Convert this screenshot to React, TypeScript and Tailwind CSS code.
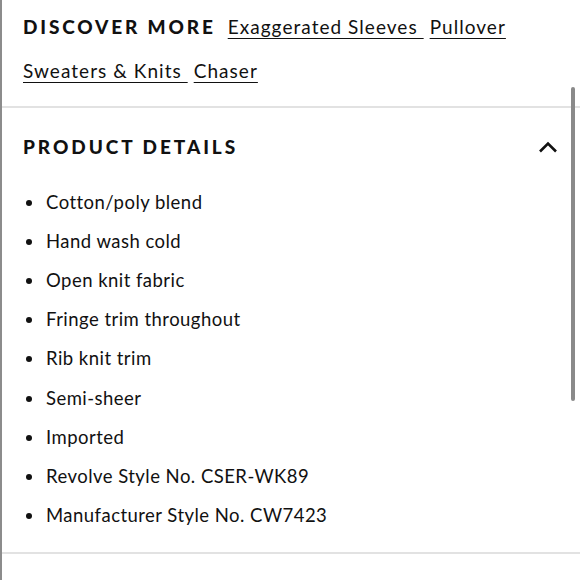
import { FC } from 'react';

const details = [
  'Cotton/poly blend',
  'Hand wash cold',
  'Open knit fabric',
  'Fringe trim throughout',
  'Rib knit trim',
  'Semi-sheer',
  'Imported',
  'Revolve Style No. CSER-WK89',
  'Manufacturer Style No. CW7423',
];

const App: FC = () => {
  return (
    <div className="relative w-[580px] h-[580px] overflow-hidden bg-white border-l-2 border-[#8c8c8c] text-[#111] font-['Lato',sans-serif]">
      {/* discover more */}
      <section className="pl-[21px] pr-4 pt-[5px] pb-[13px]">
        <div className="flex flex-wrap items-center gap-x-[6px] leading-[44px] text-[19px] tracking-[0.055em]">
          <span className="font-black text-[19px] tracking-[0.15em] mr-[6px]">DISCOVER MORE</span>
          <a href="#" className="underline underline-offset-[4px] decoration-1">Exaggerated Sleeves&nbsp;</a>
          <a href="#" className="underline underline-offset-[4px] decoration-1">Pullover</a>
          <a href="#" className="underline underline-offset-[4px] decoration-1">Sweaters &amp; Knits&nbsp;</a>
          <a href="#" className="underline underline-offset-[4px] decoration-1">Chaser</a>
        </div>
      </section>

      {/* product details */}
      <section className="border-t-2 border-[#e2e2e2] pl-[21px] pr-[22px] pt-[19px] pb-[16px]">
        <div className="flex items-center justify-between h-[40px]">
          <h2 className="font-black text-[19px] tracking-[0.155em]">PRODUCT DETAILS</h2>
          <svg width="20" height="12" viewBox="0 0 20 12" fill="none" stroke="#111" strokeWidth="2.6">
            <path d="M2 10.5 L10 2.5 L18 10.5" />
          </svg>
        </div>
        <ul className="mt-[16px] text-[18.5px] tracking-[0.025em]">
          {details.map((d) => (
            <li key={d} className="flex items-center h-[39.2px]">
              <span className="w-[6px] h-[6px] rounded-full bg-[#111] ml-[3px] mr-[14px]" />
              {d}
            </li>
          ))}
        </ul>
      </section>
      <div className="border-t-2 border-[#e2e2e2]" />

      {/* scrollbar overlay */}
      <div className="absolute right-[5px] top-[87px] w-[4px] h-[314px] rounded-full bg-[#8a8a8a]" />
    </div>
  );
};

export default App;
